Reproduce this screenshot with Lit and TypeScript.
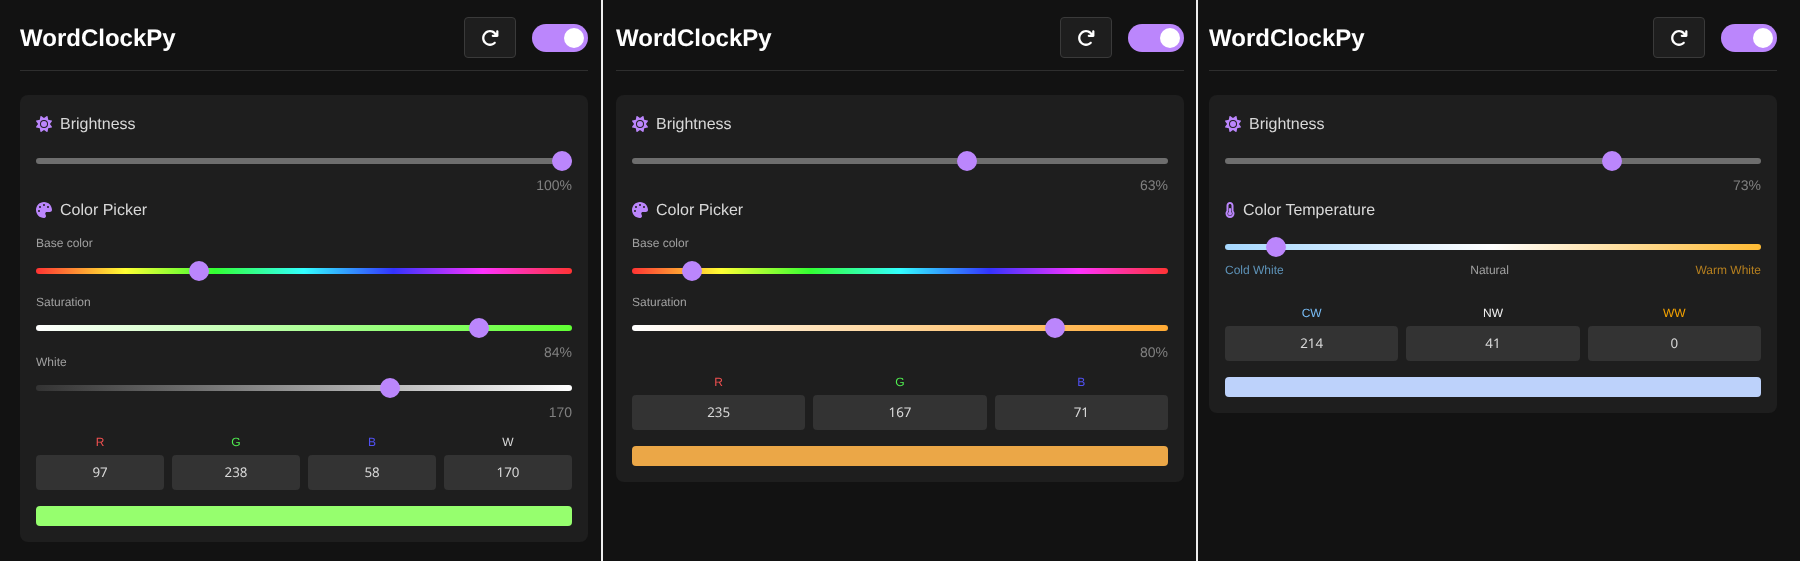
import { LitElement, html, css, svg } from 'lit';
import { customElement, property } from 'lit/decorators.js';

const ICONS: Record<string, { box: string; w: number; body: unknown }> = {
  sun: {
    box: '0 0 512 512',
    w: 16,
    body: svg`<path d="M361.5 1.2c5 2.1 8.6 6.6 9.6 11.9L391 121l107.9 19.8c5.3 1 9.8 4.6 11.9 9.6s1.5 10.7-1.6 15.2L446.9 256l62.3 90.3c3.1 4.5 3.7 10.2 1.6 15.2s-6.6 8.6-11.9 9.6L391 391 371.1 498.9c-1 5.3-4.6 9.8-9.6 11.9s-10.7 1.5-15.2-1.6L256 446.9l-90.3 62.3c-4.5 3.1-10.2 3.7-15.2 1.6s-8.6-6.6-9.6-11.9L121 391 13.1 371.1c-5.3-1-9.8-4.6-11.9-9.6s-1.5-10.7 1.6-15.2L65.1 256 2.8 165.7c-3.1-4.5-3.7-10.2-1.6-15.2s6.6-8.6 11.9-9.6L121 121 140.9 13.1c1-5.3 4.6-9.8 9.6-11.9s10.7-1.5 15.2 1.6L256 65.1 346.3 2.8c4.5-3.1 10.2-3.7 15.2-1.6zM160 256a96 96 0 1 1 192 0 96 96 0 1 1 -192 0zm224 0a128 128 0 1 0 -256 0 128 128 0 1 0 256 0z"/>`,
  },
  palette: {
    box: '0 0 512 512',
    w: 16,
    body: svg`<path d="M512 256c0 .9 0 1.8 0 2.7c-.4 36.5-33.6 61.3-70.1 61.3H344c-26.5 0-48 21.5-48 48c0 3.4 .4 6.7 1 9.9c2.1 10.2 6.5 20 10.8 29.9c6.1 13.8 12.1 27.5 12.1 42c0 31.8-21.6 60.7-53.4 62c-3.5 .1-7 .2-10.6 .2C114.6 512 0 397.4 0 256S114.6 0 256 0S512 114.6 512 256zM128 288a32 32 0 1 0 -64 0 32 32 0 1 0 64 0zm0-96a32 32 0 1 0 0-64 32 32 0 1 0 0 64zM288 96a32 32 0 1 0 -64 0 32 32 0 1 0 64 0zm96 96a32 32 0 1 0 0-64 32 32 0 1 0 0 64z"/>`,
  },
  thermo: {
    box: '0 0 320 512',
    w: 10,
    body: svg`<path d="M160 64c-26.5 0-48 21.5-48 48V276.5c0 17.3-7.1 31.9-15.3 42.5C86.2 332.6 80 349.5 80 368c0 44.2 35.8 80 80 80s80-35.8 80-80c0-18.5-6.2-35.4-16.7-48.9c-8.2-10.6-15.3-25.2-15.3-42.5V112c0-26.5-21.5-48-48-48zM48 112C48 50.2 98.1 0 160 0s112 50.1 112 112V276.5c0 6.8 3.2 13.1 7.2 18.5C295.6 316.2 304 341.1 304 368c0 79.5-64.5 144-144 144s-144-64.5-144-144c0-27 8.4-51.9 22.8-73c4-5.4 9.2-11.7 9.2-18.5V112zm176 256c0 35.3-28.7 64-64 64s-64-28.7-64-64c0-23.7 12.9-44.4 32-55.4V224c0-17.7 14.3-32 32-32s32 14.3 32 32v88.6c19.1 11.1 32 31.7 32 55.4z"/>`,
  },
};

const REFRESH = svg`<path d="M386.3 160H336c-17.7 0-32 14.3-32 32s14.3 32 32 32H464c17.7 0 32-14.3 32-32V64c0-17.7-14.3-32-32-32s-32 14.3-32 32v51.2L414.4 97.6c-87.5-87.5-229.3-87.5-316.8 0s-87.5 229.3 0 316.8s229.3 87.5 316.8 0c12.5-12.5 12.5-32.8 0-45.3s-32.8-12.5-45.3 0c-62.5 62.5-163.8 62.5-226.3 0s-62.5-163.8 0-226.3s163.8-62.5 226.3 0L386.3 160z"/>`;

const HUE_GRADIENT =
  'linear-gradient(to right, #ff3333, #ffff33, #33ff33, #33ffff, #3333ff, #ff33ff, #ff3333)';
const WHITE_GRADIENT = 'linear-gradient(to right, #333333, #ffffff)';
const TEMP_GRADIENT = 'linear-gradient(to right, #a6d8ff, #ffffff, #ffbb33)';

interface Channel {
  label: string;
  value: number;
  color: string;
}

interface ClockState {
  brightness: number;
  mode: 'color' | 'temperature';
  hue?: number;
  saturation?: number;
  white?: number;
  temperature?: number;
  channels: Channel[];
  preview: string;
}

const R = '#f05050';
const G = '#50f050';
const B = '#5050f0';

const STATES: ClockState[] = [
  {
    brightness: 100,
    mode: 'color',
    hue: 107,
    saturation: 84,
    white: 170,
    channels: [
      { label: 'R', value: 97, color: R },
      { label: 'G', value: 238, color: G },
      { label: 'B', value: 58, color: B },
      { label: 'W', value: 170, color: '#d8d8d8' },
    ],
    preview: '#96ff6e',
  },
  {
    brightness: 63,
    mode: 'color',
    hue: 35,
    saturation: 80,
    channels: [
      { label: 'R', value: 235, color: R },
      { label: 'G', value: 167, color: G },
      { label: 'B', value: 71, color: B },
    ],
    preview: '#eba747',
  },
  {
    brightness: 73,
    mode: 'temperature',
    temperature: 8,
    channels: [
      { label: 'CW', value: 214, color: '#78bcf5' },
      { label: 'NW', value: 41, color: '#f0f0f0' },
      { label: 'WW', value: 0, color: '#f5a300' },
    ],
    preview: '#bdd2fb',
  },
];

@customElement('clock-panel')
export class ClockPanel extends LitElement {
  @property({ attribute: false }) state!: ClockState;

  static styles = css`
    :host {
      display: block;
      color: #d8d8d8;
      font-family: 'Liberation Sans', Arial, sans-serif;
      text-rendering: geometricPrecision;
      will-change: opacity;
    }

    .header {
      display: flex;
      align-items: center;
      gap: 16px;
      height: 41px;
      padding-bottom: 12px;
      border-bottom: 1px solid #2e2e2e;
      margin-bottom: 24px;
    }

    h1 {
      flex: 1;
      margin: 3px 0 0;
      font-size: 24px;
      font-weight: 700;
      color: #ffffff;
    }

    .refresh {
      display: flex;
      align-items: center;
      justify-content: center;
      box-sizing: border-box;
      width: 52px;
      height: 41px;
      padding: 0;
      background: #1e1e1e;
      border: 1px solid #3a3a3a;
      border-radius: 4px;
      color: #ffffff;
    }

    .refresh svg {
      width: 18px;
      height: 18px;
      fill: currentColor;
    }

    .toggle {
      display: flex;
      justify-content: flex-end;
      align-items: center;
      box-sizing: border-box;
      width: 56px;
      height: 28px;
      padding: 4px;
      border-radius: 14px;
      background: #bb86fc;
    }

    .toggle span {
      width: 20px;
      height: 20px;
      border-radius: 50%;
      background: #ffffff;
    }

    .card {
      padding: 16px;
      border-radius: 8px;
      background: #1e1e1e;
    }

    .title {
      display: flex;
      align-items: center;
      gap: 8px;
      height: 26px;
      font-size: 16px;
    }

    .title span {
      margin-top: 1px;
    }

    .title svg {
      flex: none;
      height: 16px;
      fill: #bb86fc;
    }

    .slider {
      display: flex;
      align-items: center;
      height: 20px;
    }

    input[type='range'] {
      -webkit-appearance: none;
      appearance: none;
      display: block;
      width: 100%;
      height: 6px;
      margin: 0;
      border-radius: 3px;
      outline: none;
      background: #6e6e6e;
    }

    input[type='range']::-webkit-slider-thumb {
      -webkit-appearance: none;
      appearance: none;
      width: 20px;
      height: 20px;
      border-radius: 50%;
      background: #bb86fc;
    }

    .value {
      height: 16px;
      line-height: 16px;
      text-align: right;
      font-size: 14px;
      color: #808080;
    }

    .sub {
      height: 14px;
      line-height: 14px;
      font-size: 12px;
      color: #a0a0a0;
    }

    .brightness { margin-top: 14px; }
    .after-slider { margin-top: 6px; }
    .second-title { margin-top: 4px; }
    .base-label { margin-top: 13px; }
    .base-slider { margin-top: 11px; }
    .sat-label { margin-top: 14px; }
    .sat-slider { margin-top: 9px; }
    .white-label { margin-top: -5px; }
    .white-slider { margin-top: 9px; }
    .channels.color { margin-top: 15px; }

    .temp-slider { margin-top: 14px; }

    .temp-labels {
      display: flex;
      justify-content: space-between;
      height: 14px;
      line-height: 14px;
      margin-top: 6px;
      margin-bottom: 29px;
      font-size: 12px;
      color: #a0a0a0;
    }

    .temp-labels .cold { color: #5e93b8; }
    .temp-labels .warm { color: #b57f1f; }

    .channels {
      display: grid;
      grid-auto-flow: column;
      grid-auto-columns: 1fr;
      gap: 8px;
    }

    .channel-label {
      height: 14px;
      line-height: 14px;
      margin-bottom: 6px;
      text-align: center;
      font-size: 12px;
    }

    .channel-value {
      height: 35px;
      line-height: 34px;
      border-radius: 4px;
      background: #333333;
      text-align: center;
      font-family: 'Noto Sans', sans-serif;
      font-size: 13.33px;
      color: #d8d8d8;
    }

    .preview {
      height: 20px;
      margin-top: 16px;
      border-radius: 4px;
    }
  `;

  private icon(name: string) {
    const i = ICONS[name];
    return html`<svg viewBox=${i.box} width=${i.w} height="16">${i.body}</svg>`;
  }

  private slider(value: number, max: number, cls: string, bg?: string) {
    return html`<div class="slider ${cls}">
      <input
        type="range"
        min="0"
        max=${max}
        .value=${String(value)}
        style=${bg ? `background:${bg}` : ''}
      />
    </div>`;
  }

  private colorControls(s: ClockState) {
    const hue = s.hue ?? 0;
    const satBg = `linear-gradient(to right, #ffffff, hsl(${hue}, 100%, 60%))`;
    return html`
      <div class="title second-title">${this.icon('palette')}<span>Color Picker</span></div>
      <div class="sub base-label">Base color</div>
      ${this.slider(hue, 360, 'base-slider', HUE_GRADIENT)}
      <div class="sub sat-label">Saturation</div>
      ${this.slider(s.saturation ?? 0, 100, 'sat-slider', satBg)}
      <div class="value after-slider">${s.saturation}%</div>
      ${s.white !== undefined
        ? html`
            <div class="sub white-label">White</div>
            ${this.slider(s.white, 255, 'white-slider', WHITE_GRADIENT)}
            <div class="value after-slider">${s.white}</div>
          `
        : ''}
    `;
  }

  private tempControls(s: ClockState) {
    return html`
      <div class="title second-title">${this.icon('thermo')}<span>Color Temperature</span></div>
      ${this.slider(s.temperature ?? 0, 100, 'temp-slider', TEMP_GRADIENT)}
      <div class="temp-labels">
        <span class="cold">Cold White</span>
        <span>Natural</span>
        <span class="warm">Warm White</span>
      </div>
    `;
  }

  render() {
    const s = this.state;
    return html`
      <div class="header">
        <h1>WordClockPy</h1>
        <button class="refresh"><svg viewBox="0 0 512 512">${REFRESH}</svg></button>
        <div class="toggle"><span></span></div>
      </div>
      <div class="card">
        <div class="title">${this.icon('sun')}<span>Brightness</span></div>
        ${this.slider(s.brightness, 100, 'brightness')}
        <div class="value after-slider">${s.brightness}%</div>
        ${s.mode === 'color' ? this.colorControls(s) : this.tempControls(s)}
        <div class="channels ${s.mode}">
          ${s.channels.map(
            (c) => html`<div>
              <div class="channel-label" style="color:${c.color}">${c.label}</div>
              <div class="channel-value">${c.value}</div>
            </div>`,
          )}
        </div>
        <div class="preview" style="background:${s.preview}"></div>
      </div>
    `;
  }
}

@customElement('app-root')
export class AppRoot extends LitElement {
  static styles = css`
    :host {
      display: flex;
      height: 561px;
      background: #121212;
      overflow: hidden;
    }

    clock-panel {
      box-sizing: content-box;
      width: 568px;
      padding-top: 17px;
    }

    .first { padding-left: 20px; padding-right: 13px; }
    .second { padding-left: 13px; padding-right: 11.5px; }
    .third { padding-left: 11.5px; padding-right: 23px; }

    .divider {
      flex: none;
      width: 2px;
      background: #eeeeee;
    }
  `;

  render() {
    return html`
      <clock-panel class="first" .state=${STATES[0]}></clock-panel>
      <div class="divider"></div>
      <clock-panel class="second" .state=${STATES[1]}></clock-panel>
      <div class="divider"></div>
      <clock-panel class="third" .state=${STATES[2]}></clock-panel>
    `;
  }
}
